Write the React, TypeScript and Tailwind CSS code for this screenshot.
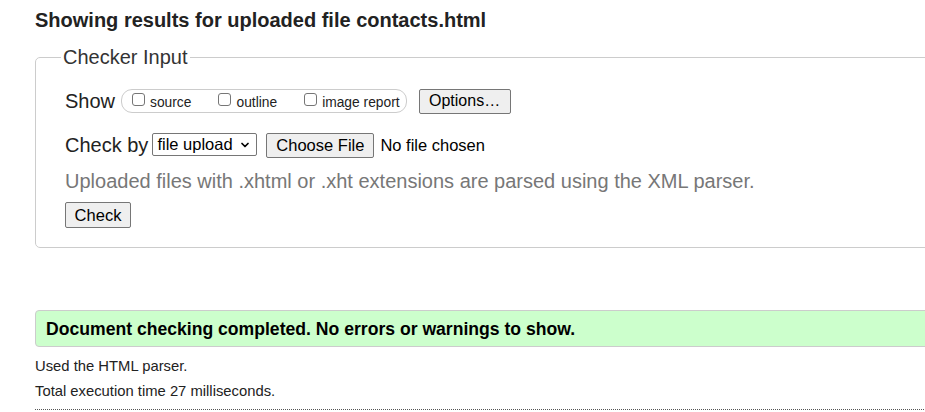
import { ChevronDown } from 'lucide-react'

const SHOW_OPTIONS = [
  { label: 'source', gap: 'mr-[23px]' },
  { label: 'outline', gap: 'mr-[23px]' },
  { label: 'image report', gap: 'mr-0' },
]

export default function App() {
  return (
    <div className="w-[925px] h-[412px] overflow-hidden bg-white font-['Liberation_Sans',Arial,sans-serif] text-[#222]">
      <div className="w-[1300px] pl-[35px]">

        {/* Title */}
        <h2 className="pt-[8px] text-[20px] leading-[24px] font-bold text-[#222]">
          Showing results for uploaded file contacts.html
        </h2>

        {/* Checker form */}
        <fieldset className="mt-[14px] border border-[#ccc] rounded-[5px] pl-[25px] pr-4 pb-[19px]">
          <legend className="px-[2px] text-[20px] leading-[23px] text-[#333]">Checker Input</legend>

          <div className="ml-[4px] mt-[19px] flex items-center h-[26px]">
            <span className="text-[20px] leading-[23px] mr-[6px]">Show</span>
            <div className="flex items-center h-[24px] border border-[#ccc] rounded-[11px] pl-[6px] pr-[6px]">
              {SHOW_OPTIONS.map(opt => (
                <label key={opt.label} className={`flex items-center ${opt.gap}`}>
                  <span className="block shrink-0 w-[13px] h-[13px] ml-[4px] mr-[3px] -mt-[3px] border border-[#767676] rounded-[3px] bg-white" />
                  <span className="ml-[2px] text-[13.8px] leading-[16px] mt-[3px]">{opt.label}</span>
                </label>
              ))}
            </div>
            <button className="ml-[12px] w-[92px] h-[25px] bg-[#efefef] border border-[#767676] rounded-[2px] text-[16px] leading-[18px] text-black">
              Options…
            </button>
          </div>

          <div className="ml-[4px] mt-[18px] flex items-center h-[26px]">
            <span className="text-[20px] leading-[23px] mr-[4px]">Check by</span>
            <div className="relative">
              <select className="appearance-none w-[105px] h-[23px] pl-[4px] border border-[#767676] rounded-[2px] text-[16.5px] leading-[18px] text-black bg-white">
                <option>file upload</option>
              </select>
              <ChevronDown className="absolute right-[6px] top-[6px] w-[12px] h-[12px] text-black pointer-events-none" strokeWidth={3.5} />
            </div>
            <button className="ml-[9px] w-[108px] h-[25px] bg-[#efefef] border border-[#767676] rounded-[2px] text-[16.5px] leading-[18px] text-black">
              Choose File
            </button>
            <span className="ml-[6px] text-[16.5px] leading-[18px] text-black">No file chosen</span>
          </div>

          <p className="ml-[4px] mt-[11px] text-[20px] leading-[24px] text-[#777]">
            Uploaded files with .xhtml or .xht extensions are parsed using the XML parser.
          </p>

          <button className="ml-[4px] mt-[9px] block w-[66px] h-[26px] bg-[#efefef] border border-[#767676] rounded-[2px] text-[16.5px] leading-[18px] text-black">
            Check
          </button>
        </fieldset>

        {/* Result */}
        <div className="mt-[62px] h-[37px] flex items-center pl-[10px] bg-[#ccffcc] border border-[#ccc] rounded-[4px]">
          <span className="text-[17.6px] leading-[20px] font-bold text-black">
            Document checking completed. No errors or warnings to show.
          </span>
        </div>

        <p className="mt-[11px] text-[14.8px] leading-[17px] text-[#222]">Used the HTML parser.</p>
        <p className="mt-[8px] text-[14.8px] leading-[17px] text-[#222]">Total execution time 27 milliseconds.</p>
        <div className="mt-[9px] border-b border-dotted border-[#555]" />

      </div>
    </div>
  )
}
